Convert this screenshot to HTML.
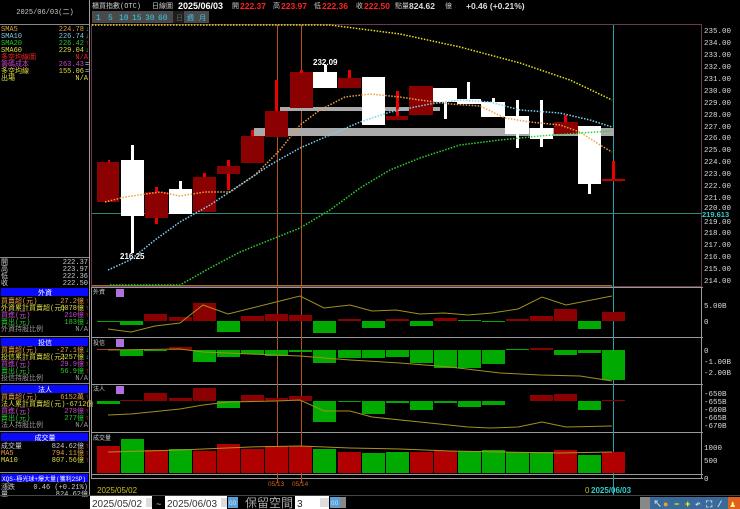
<!DOCTYPE html>
<html><head><meta charset="utf-8"><style>
html,body{margin:0;padding:0;background:#000;width:740px;height:509px;overflow:hidden}
svg{display:block}
text{font-family:"Liberation Mono","Noto Sans CJK TC",monospace}
.s{font-family:"Liberation Sans","Noto Sans CJK TC",sans-serif}
</style></head><body>
<svg width="740" height="509" viewBox="0 0 740 509" xmlns="http://www.w3.org/2000/svg" font-size="7">
<rect width="740" height="509" fill="#000"/>
<!-- left panel -->
<line x1="89.5" y1="0" x2="89.5" y2="495" stroke="#a89aa0"/>
<text x="45" y="14" fill="#ccc" text-anchor="middle">2025/06/03(二)</text>
<line x1="0" y1="24.5" x2="89" y2="24.5" stroke="#888"/>
<g>
<text x="1" y="31" fill="#e8a040">SMA5</text><text x="84" y="31" fill="#e8a040" text-anchor="end">224.78</text><text x="85" y="31" fill="#2c2">↓</text>
<text x="1" y="38" fill="#7fc8e8">SMA10</text><text x="84" y="38" fill="#7fc8e8" text-anchor="end">226.74</text><text x="85" y="38" fill="#2c2">↓</text>
<text x="1" y="45" fill="#2c2">SMA20</text><text x="84" y="45" fill="#2c2" text-anchor="end">226.42</text><text x="85" y="45" fill="#f22">↑</text>
<text x="1" y="52" fill="#dd4">SMA60</text><text x="84" y="52" fill="#dd4" text-anchor="end">229.04</text><text x="85" y="52" fill="#2c2">↓</text>
<text x="1" y="59" fill="#e22">多空均線圖</text><text x="88" y="59" fill="#e22" text-anchor="end">N/A</text>
<text x="1" y="66" fill="#c4c">籌碼成本</text><text x="84" y="66" fill="#c4c" text-anchor="end">263.43</text><text x="85" y="66" fill="#ccc">=</text>
<text x="1" y="73" fill="#dd4">多空均線</text><text x="84" y="73" fill="#dd4" text-anchor="end">155.06</text><text x="85" y="73" fill="#ccc">=</text>
<text x="1" y="80" fill="#dd4">出場</text><text x="88" y="80" fill="#dd4" text-anchor="end">N/A</text>
</g>
<line x1="0" y1="257.5" x2="89" y2="257.5" stroke="#888"/>
<text x="1" y="264" fill="#ccc">開</text><text x="88" y="264" fill="#ccc" text-anchor="end">222.37</text>
<text x="1" y="271" fill="#ccc">高</text><text x="88" y="271" fill="#ccc" text-anchor="end">223.97</text>
<text x="1" y="278" fill="#ccc">低</text><text x="88" y="278" fill="#ccc" text-anchor="end">222.36</text>
<text x="1" y="285" fill="#ccc">收</text><text x="88" y="285" fill="#ccc" text-anchor="end">222.50</text>
<!-- 外資 -->
<rect x="1" y="288" width="87" height="8" fill="#0a0aff"/><text x="45" y="295" fill="#fff" text-anchor="middle">外資</text>
<text x="1" y="303" fill="#e8a040">買賣超(元)</text><text x="84" y="303" fill="#e8a040" text-anchor="end">27.2億</text><text x="85" y="303" fill="#f22">↑</text>
<text x="1" y="310" fill="#dd4">外資累計買賣超(元)</text><text x="84" y="310" fill="#dd4" text-anchor="end">6078億</text><text x="85" y="310" fill="#f22">↑</text>
<text x="1" y="317" fill="#c4c">買進(元)</text><text x="84" y="317" fill="#c4c" text-anchor="end">210億</text><text x="85" y="317" fill="#f22">↑</text>
<text x="1" y="324" fill="#2c2">賣出(元)</text><text x="84" y="324" fill="#2c2" text-anchor="end">183億</text><text x="85" y="324" fill="#2c2">↓</text>
<text x="1" y="331" fill="#999">外資持股比例</text><text x="88" y="331" fill="#999" text-anchor="end">N/A</text>
<line x1="0" y1="336.5" x2="89" y2="336.5" stroke="#888"/>
<!-- 投信 -->
<rect x="1" y="338" width="87" height="8" fill="#0a0aff"/><text x="45" y="345" fill="#fff" text-anchor="middle">投信</text>
<text x="1" y="352" fill="#e8a040">買賣超(元)</text><text x="84" y="352" fill="#e8a040" text-anchor="end">-27.1億</text><text x="85" y="352" fill="#2c2">↓</text>
<text x="1" y="359" fill="#dd4">投信累計買賣超(元)</text><text x="84" y="359" fill="#dd4" text-anchor="end">2257億</text><text x="85" y="359" fill="#2c2">↓</text>
<text x="1" y="366" fill="#c4c">買進(元)</text><text x="84" y="366" fill="#c4c" text-anchor="end">29.9億</text><text x="85" y="366" fill="#f22">↑</text>
<text x="1" y="373" fill="#2c2">賣出(元)</text><text x="84" y="373" fill="#2c2" text-anchor="end">56.9億</text><text x="85" y="373" fill="#f22">↑</text>
<text x="1" y="380" fill="#999">投信持股比例</text><text x="88" y="380" fill="#999" text-anchor="end">N/A</text>
<line x1="0" y1="383.5" x2="89" y2="383.5" stroke="#888"/>
<!-- 法人 -->
<rect x="1" y="385" width="87" height="8" fill="#0a0aff"/><text x="45" y="392" fill="#fff" text-anchor="middle">法人</text>
<text x="1" y="399" fill="#e8a040">買賣超(元)</text><text x="84" y="399" fill="#e8a040" text-anchor="end">6152萬</text><text x="85" y="399" fill="#f22">↑</text>
<text x="1" y="406" fill="#dd4">法人累計買賣超(元)-6712億</text><text x="85" y="406" fill="#f22">↑</text>
<text x="1" y="413" fill="#c4c">買進(元)</text><text x="84" y="413" fill="#c4c" text-anchor="end">278億</text><text x="85" y="413" fill="#f22">↑</text>
<text x="1" y="420" fill="#2c2">賣出(元)</text><text x="84" y="420" fill="#2c2" text-anchor="end">277億</text><text x="85" y="420" fill="#f22">↑</text>
<text x="1" y="427" fill="#999">法人持股比例</text><text x="88" y="427" fill="#999" text-anchor="end">N/A</text>
<line x1="0" y1="431.5" x2="89" y2="431.5" stroke="#888"/>
<!-- 成交量 -->
<rect x="1" y="433" width="87" height="8" fill="#0a0aff"/><text x="45" y="440" fill="#fff" text-anchor="middle">成交量</text>
<text x="1" y="448" fill="#ccc">成交量</text><text x="84" y="448" fill="#ccc" text-anchor="end">824.62億</text><text x="85" y="448" fill="#f22">↑</text>
<text x="1" y="455" fill="#e8a040">MA5</text><text x="84" y="455" fill="#e8a040" text-anchor="end">794.11億</text><text x="85" y="455" fill="#f22">↑</text>
<text x="1" y="462" fill="#dd4">MA10</text><text x="84" y="462" fill="#dd4" text-anchor="end">807.56億</text><text x="85" y="462" fill="#f22">↑</text>
<line x1="0" y1="472.5" x2="89" y2="472.5" stroke="#888"/>
<rect x="1" y="474" width="87" height="8" fill="#0a0aff"/><text x="2" y="481" fill="#fff" font-size="6">XQS-極光球+爆大量(獲利2SP)</text>
<text x="1" y="489" fill="#ccc">漲跌</text><text x="88" y="489" fill="#ccc" text-anchor="end">0.46 (+0.21%)</text>
<text x="1" y="496" fill="#ccc">量</text><text x="88" y="496" fill="#ccc" text-anchor="end">824.62億</text>

<!-- header -->
<text x="92" y="8" fill="#ccc">櫃買指數(OTC)</text>
<text x="152" y="8" fill="#ccc">日線圖</text>
<text x="178" y="9" fill="#fff" class="s" font-size="9" font-weight="bold">2025/06/03</text>
<text x="232" y="8" fill="#ccc">開</text><text x="240" y="9" class="s" fill="#f22" font-size="8.5" font-weight="bold">222.37</text>
<text x="273" y="8" fill="#ccc">高</text><text x="281" y="9" class="s" fill="#f22" font-size="8.5" font-weight="bold">223.97</text>
<text x="314" y="8" fill="#ccc">低</text><text x="322" y="9" class="s" fill="#f22" font-size="8.5" font-weight="bold">222.36</text>
<text x="356" y="8" fill="#ccc">收</text><text x="364" y="9" class="s" fill="#f22" font-size="8.5" font-weight="bold">222.50</text>
<text x="395" y="8" fill="#ccc">點</text><text x="402" y="8" fill="#ccc">量</text>
<text x="409" y="9" class="s" fill="#ddd" font-size="8.5" font-weight="bold">824.62</text><text x="445" y="8" fill="#ccc">億</text>
<text x="466" y="9" class="s" fill="#ddd" font-size="8.5" font-weight="bold">+0.46 (+0.21%)</text>
<rect x="92" y="11" width="81" height="12" fill="#4a4a4a"/>
<rect x="173" y="11" width="11" height="12" fill="#1e1e1e"/>
<rect x="184" y="11" width="25" height="12" fill="#4a4a4a"/>
<g class="s" font-size="8" fill="#3ce">
<text x="96" y="20">1</text>
<text x="108" y="20">5</text>
<text x="119" y="20">10</text>
<text x="132" y="20">15</text>
<text x="145" y="20">30</text>
<text x="158" y="20">60</text>
</g>
<text x="176" y="20" fill="#666">日</text>
<text x="187" y="20" fill="#3ce">週</text>
<text x="199" y="20" fill="#3ce">月</text>

<!-- main panel frame -->
<rect x="91.5" y="24.5" width="610" height="262" fill="none" stroke="#6a3a50"/>
<line x1="91" y1="287.5" x2="703" y2="287.5" stroke="#999"/>
<line x1="91" y1="337.5" x2="703" y2="337.5" stroke="#999"/>
<line x1="91" y1="384.5" x2="703" y2="384.5" stroke="#999"/>
<line x1="91" y1="432.5" x2="703" y2="432.5" stroke="#999"/>
<line x1="91" y1="474.5" x2="703" y2="474.5" stroke="#999"/>
<line x1="91" y1="478.5" x2="703" y2="478.5" stroke="#999"/>
<line x1="701.5" y1="287" x2="701.5" y2="479" stroke="#999"/>
<line x1="91.5" y1="287" x2="91.5" y2="479" stroke="#999"/>

<!-- right axis -->
<g class="s" font-size="7.5" fill="#ddd">
<text x="704" y="33">235.00</text><text x="704" y="45">234.00</text><text x="704" y="57">233.00</text><text x="704" y="69">232.00</text>
<text x="704" y="81">231.00</text><text x="704" y="93">230.00</text><text x="704" y="105">229.00</text><text x="704" y="117">228.00</text>
<text x="704" y="129">227.00</text><text x="704" y="140">226.00</text><text x="704" y="152">225.00</text><text x="704" y="164">224.00</text>
<text x="704" y="176">223.00</text><text x="704" y="188">222.00</text><text x="704" y="200">221.00</text><text x="704" y="210">220.00</text>
<text x="704" y="224">219.00</text><text x="704" y="235">218.00</text><text x="704" y="247">217.00</text><text x="704" y="259">216.00</text>
<text x="704" y="271">215.00</text><text x="704" y="283">214.00</text>
<text x="704" y="308">5.00B</text><text x="704" y="324">0</text>
<text x="704" y="353">0</text><text x="704" y="364">-1.00B</text><text x="704" y="375">-2.00B</text>
<text x="704" y="396">-650B</text><text x="704" y="404">-655B</text><text x="704" y="412">-660B</text><text x="704" y="420">-665B</text><text x="704" y="428">-670B</text>
<text x="704" y="450">1000</text><text x="704" y="463">500</text><text x="704" y="481">0</text>
</g>
<rect x="702" y="211" width="36" height="7" fill="#000"/>
<text x="702" y="217" fill="#3cc" class="s" font-size="7.5" font-weight="bold">219.613</text>

<!-- reference lines -->
<line x1="92" y1="213.5" x2="701" y2="213.5" stroke="#2a8a7a"/>
<line x1="277.5" y1="25" x2="277.5" y2="483" stroke="#b85020"/>
<line x1="301.5" y1="25" x2="301.5" y2="483" stroke="#b85020"/>
<line x1="613.5" y1="25" x2="613.5" y2="495" stroke="#2aa0a8"/>
<line x1="92" y1="285.5" x2="612" y2="285.5" stroke="#a07020"/>

<!-- gray bars -->
<rect x="280" y="107" width="160" height="4" fill="#aaa"/>
<rect x="254" y="128" width="360" height="8" fill="#aaa"/>

<!-- candles -->
<g>
<rect x="108" y="160" width="2" height="3" fill="#e00"/><rect x="97" y="162" width="22" height="40" fill="#8b0000"/>
<rect x="131" y="145" width="3" height="108" fill="#fff"/><rect x="121" y="160" width="23" height="56" fill="#fff"/>
<rect x="155" y="187" width="3" height="37" fill="#e00"/><rect x="145" y="192" width="23" height="26" fill="#8b0000"/>
<rect x="179" y="181" width="3" height="10" fill="#fff"/><rect x="169" y="189" width="23" height="25" fill="#fff"/>
<rect x="203" y="173" width="3" height="5" fill="#e00"/><rect x="193" y="177" width="23" height="35" fill="#8b0000"/>
<rect x="227" y="160" width="3" height="30" fill="#e00"/><rect x="217" y="166" width="23" height="8" fill="#8b0000"/>
<rect x="251" y="130" width="3" height="7" fill="#e00"/><rect x="241" y="136" width="23" height="27" fill="#8b0000"/>
<rect x="275" y="80" width="3" height="31" fill="#e00"/><rect x="265" y="111" width="23" height="26" fill="#8b0000"/>
<rect x="290" y="72" width="23" height="36" fill="#8b0000"/><rect x="300" y="70" width="3" height="3" fill="#e00"/>
<rect x="324" y="65" width="3" height="8" fill="#fff"/><rect x="313" y="72" width="24" height="16" fill="#fff"/>
<rect x="348" y="70" width="3" height="9" fill="#e00"/><rect x="338" y="78" width="23" height="10" fill="#8b0000"/>
<rect x="362" y="77" width="23" height="48" fill="#fff"/>
<rect x="396" y="91" width="3" height="27" fill="#e00"/><rect x="386" y="116" width="22" height="4" fill="#8b0000"/>
<rect x="409" y="86" width="24" height="29" fill="#8b0000"/>
<rect x="444" y="100" width="3" height="19" fill="#fff"/><rect x="433" y="88" width="24" height="14" fill="#fff"/>
<rect x="467" y="82" width="3" height="22" fill="#fff"/><rect x="457" y="99" width="24" height="5" fill="#fff"/>
<rect x="481" y="102" width="24" height="15" fill="#fff"/><rect x="492" y="98" width="3" height="5" fill="#fff"/>
<rect x="516" y="100" width="3" height="48" fill="#fff"/><rect x="505" y="116" width="24" height="18" fill="#fff"/>
<rect x="540" y="100" width="3" height="47" fill="#fff"/><rect x="530" y="128" width="23" height="11" fill="#fff"/>
<rect x="564" y="115" width="3" height="8" fill="#e00"/><rect x="554" y="122" width="24" height="12" fill="#8b0000"/>
<rect x="588" y="180" width="3" height="14" fill="#fff"/><rect x="578" y="126" width="23" height="58" fill="#fff"/>
<rect x="612" y="161" width="3" height="19" fill="#e00"/><rect x="602" y="179" width="23" height="2" fill="#b00"/>
</g>
<text x="313" y="65" fill="#fff" class="s" font-size="8" font-weight="bold">232.09</text>
<text x="120" y="259" fill="#fff" class="s" font-size="8" font-weight="bold">216.25</text>

<!-- MAs -->
<g fill="none" stroke-width="1.5" stroke-dasharray="1.5 1.5">
<polyline stroke="#e8e020" points="92,25 330,25 400,34 460,47 520,63 570,80 612,100"/>
<polyline stroke="#f0a040" points="105,202 125,197 160,192 180,196 205,192 230,192 255,175 280,150 300,125 320,110 345,97 370,94 400,97 420,100 450,104 480,106 505,118 530,122 560,125 580,132 600,145 612,152"/>
<polyline stroke="#80d0f0" points="108,270 130,260 155,240 180,222 210,205 240,185 270,165 300,148 330,135 360,122 390,112 430,104 460,100 490,102 520,110 560,113 590,120 612,127"/>
<polyline stroke="#30d030" points="110,285 180,285 210,268 240,252 270,240 300,228 330,210 360,188 390,170 420,158 460,145 500,140 540,136 580,133 612,131"/>
</g>

<!-- subpanel labels -->
<text x="93" y="294" fill="#ccc" font-size="6">外資</text><rect x="116" y="289" width="8" height="8" fill="#b070e0"/>
<text x="93" y="345" fill="#ccc" font-size="6">投信</text><rect x="116" y="339" width="8" height="8" fill="#b070e0"/>
<text x="93" y="391" fill="#ccc" font-size="6">法人</text><rect x="116" y="386" width="8" height="8" fill="#b070e0"/>
<text x="93" y="440" fill="#ccc" font-size="6">成交量</text>

<!-- 外資 bars zero 321 -->
<g>
<rect x="97" y="321" width="23" height="1" fill="#0a0"/>
<rect x="120" y="321" width="23" height="4" fill="#0a0"/>
<rect x="144" y="314" width="23" height="7" fill="#8b0000"/>
<rect x="169" y="317" width="23" height="4" fill="#8b0000"/>
<rect x="193" y="303" width="23" height="18" fill="#8b0000"/>
<rect x="217" y="321" width="23" height="11" fill="#0a0"/>
<rect x="241" y="316" width="23" height="5" fill="#8b0000"/>
<rect x="265" y="314" width="23" height="7" fill="#8b0000"/>
<rect x="289" y="315" width="23" height="6" fill="#8b0000"/>
<rect x="313" y="321" width="23" height="12" fill="#0a0"/>
<rect x="338" y="319" width="23" height="2" fill="#8b0000"/>
<rect x="362" y="321" width="23" height="7" fill="#0a0"/>
<rect x="386" y="319" width="23" height="2" fill="#8b0000"/>
<rect x="410" y="321" width="23" height="5" fill="#0a0"/>
<rect x="434" y="318" width="23" height="3" fill="#8b0000"/>
<rect x="458" y="320" width="23" height="1" fill="#0a0"/>
<rect x="482" y="321" width="23" height="1" fill="#0a0"/>
<rect x="506" y="319" width="23" height="2" fill="#8b0000"/>
<rect x="530" y="316" width="23" height="5" fill="#8b0000"/>
<rect x="554" y="309" width="23" height="12" fill="#8b0000"/>
<rect x="578" y="321" width="23" height="8" fill="#0a0"/>
<rect x="602" y="312" width="23" height="9" fill="#8b0000"/>
</g>
<polyline fill="none" stroke="#a09020" points="108,329 131,332 155,326 180,323 203,305 228,314 252,308 276,302 300,296 324,308 350,305 372,311 396,310 420,314 444,313 468,315 492,313 518,309 542,297 566,305 612,296"/>

<!-- 投信 zero 350 -->
<g>
<rect x="97" y="349" width="23" height="1" fill="#a04020"/>
<rect x="120" y="350" width="23" height="6" fill="#0a0"/>
<rect x="144" y="350" width="23" height="1" fill="#0a0"/>
<rect x="169" y="347" width="23" height="3" fill="#8b0000"/>
<rect x="193" y="350" width="23" height="12" fill="#0a0"/>
<rect x="217" y="350" width="23" height="7" fill="#0a0"/>
<rect x="241" y="350" width="23" height="4" fill="#0a0"/>
<rect x="265" y="350" width="23" height="6" fill="#0a0"/>
<rect x="289" y="350" width="23" height="2" fill="#0a0"/>
<rect x="313" y="350" width="23" height="13" fill="#0a0"/>
<rect x="338" y="350" width="23" height="8" fill="#0a0"/>
<rect x="362" y="350" width="23" height="8" fill="#0a0"/>
<rect x="386" y="350" width="23" height="7" fill="#0a0"/>
<rect x="410" y="350" width="23" height="13" fill="#0a0"/>
<rect x="434" y="350" width="23" height="18" fill="#0a0"/>
<rect x="458" y="350" width="23" height="18" fill="#0a0"/>
<rect x="482" y="350" width="23" height="14" fill="#0a0"/>
<rect x="506" y="349" width="23" height="1" fill="#0a0"/>
<rect x="530" y="348" width="23" height="2" fill="#8b0000"/>
<rect x="554" y="350" width="23" height="5" fill="#0a0"/>
<rect x="578" y="350" width="23" height="3" fill="#0a0"/>
<rect x="602" y="350" width="23" height="30" fill="#0a0"/>
</g>
<polyline fill="none" stroke="#a09020" points="108,350 180,349 203,352 250,354 300,356 350,360 400,363 450,367 500,373 540,375 580,376 612,381"/>

<!-- 法人 zero 401 -->
<g>
<rect x="97" y="401" width="23" height="3" fill="#0a0"/>
<rect x="120" y="400" width="23" height="1" fill="#8b0000"/>
<rect x="144" y="393" width="23" height="8" fill="#8b0000"/>
<rect x="169" y="398" width="23" height="3" fill="#8b0000"/>
<rect x="193" y="388" width="23" height="13" fill="#8b0000"/>
<rect x="217" y="401" width="23" height="7" fill="#0a0"/>
<rect x="241" y="395" width="23" height="6" fill="#8b0000"/>
<rect x="265" y="398" width="23" height="3" fill="#8b0000"/>
<rect x="289" y="396" width="23" height="5" fill="#8b0000"/>
<rect x="313" y="401" width="23" height="21" fill="#0a0"/>
<rect x="338" y="401" width="23" height="1" fill="#0a0"/>
<rect x="362" y="401" width="23" height="13" fill="#0a0"/>
<rect x="386" y="401" width="23" height="2" fill="#0a0"/>
<rect x="410" y="401" width="23" height="9" fill="#0a0"/>
<rect x="434" y="401" width="23" height="2" fill="#0a0"/>
<rect x="458" y="401" width="23" height="6" fill="#0a0"/>
<rect x="482" y="401" width="23" height="4" fill="#0a0"/>
<rect x="530" y="395" width="23" height="6" fill="#8b0000"/>
<rect x="554" y="394" width="23" height="7" fill="#8b0000"/>
<rect x="578" y="401" width="23" height="9" fill="#0a0"/>
<rect x="602" y="400" width="23" height="1" fill="#8b0000"/>
</g>
<polyline fill="none" stroke="#a09020" points="108,415 131,414 180,409 203,405 228,402 276,401 300,400 324,411 350,411 372,417 420,422 468,427 490,428 518,427 542,422 566,427 612,426"/>

<!-- volume base 473 -->
<g>
<rect x="97" y="446" width="23" height="27" fill="#b00000"/>
<rect x="121" y="439" width="23" height="34" fill="#0a0"/>
<rect x="145" y="450" width="23" height="23" fill="#b00000"/>
<rect x="169" y="449" width="23" height="24" fill="#0a0"/>
<rect x="193" y="451" width="23" height="22" fill="#b00000"/>
<rect x="217" y="444" width="23" height="29" fill="#b00000"/>
<rect x="241" y="449" width="23" height="24" fill="#b00000"/>
<rect x="265" y="446" width="23" height="27" fill="#b00000"/>
<rect x="289" y="446" width="23" height="27" fill="#b00000"/>
<rect x="313" y="449" width="23" height="24" fill="#0a0"/>
<rect x="338" y="452" width="23" height="21" fill="#b00000"/>
<rect x="362" y="453" width="23" height="20" fill="#0a0"/>
<rect x="386" y="452" width="23" height="21" fill="#0a0"/>
<rect x="410" y="452" width="23" height="21" fill="#b00000"/>
<rect x="434" y="451" width="23" height="22" fill="#b00000"/>
<rect x="458" y="451" width="23" height="22" fill="#0a0"/>
<rect x="482" y="450" width="23" height="23" fill="#0a0"/>
<rect x="506" y="452" width="23" height="21" fill="#0a0"/>
<rect x="530" y="452" width="23" height="21" fill="#0a0"/>
<rect x="554" y="450" width="23" height="23" fill="#b00000"/>
<rect x="578" y="455" width="23" height="18" fill="#0a0"/>
<rect x="602" y="452" width="23" height="21" fill="#b00000"/>
</g>
<polyline fill="none" stroke="#b09020" points="108,452 180,450 250,447 300,446 350,448 400,449 450,451 500,452 560,453 612,452"/>

<!-- dates -->
<text x="97" y="493" fill="#c8c020" class="s" font-size="8">2025/05/02</text>
<text x="268" y="486" fill="#d06020" class="s" font-size="6.5">05/13</text>
<text x="292" y="486" fill="#d06020" class="s" font-size="6.5">05/14</text>
<text x="585" y="493" fill="#c8c020" class="s" font-size="8">0</text>
<text x="591" y="493" fill="#3cc" class="s" font-size="8" font-weight="bold">2025/06/03</text>
<line x1="0" y1="495.5" x2="740" y2="495.5" stroke="#444"/>

<!-- bottom controls -->
<rect x="90" y="496" width="62" height="13" fill="#fff"/><text x="92" y="507" fill="#333" class="s" font-size="10">2025/05/02</text>
<rect x="146" y="498" width="6" height="9" fill="#ddd"/>
<text x="156" y="507" fill="#ccc" font-size="9">~</text>
<rect x="165" y="496" width="62" height="13" fill="#fff"/><text x="167" y="507" fill="#333" class="s" font-size="10">2025/06/03</text>
<rect x="221" y="498" width="6" height="9" fill="#ddd"/>
<rect x="228" y="497" width="10" height="11" fill="#5aa0d8"/><text x="229" y="505" fill="#cde" font-size="6">GO</text>
<text x="245" y="507" fill="#aaa" class="s" font-size="12">保留空間</text>
<rect x="295" y="496" width="34" height="13" fill="#fff"/><text x="297" y="507" fill="#222" class="s" font-size="10">3</text>
<rect x="320" y="498" width="9" height="9" fill="#ddd"/>
<rect x="330" y="497" width="10" height="11" fill="#5aa0d8"/><text x="331" y="505" fill="#cde" font-size="6">GO</text>
<rect x="340" y="497" width="6" height="11" fill="#888"/>
<rect x="640" y="497" width="100" height="12" fill="#3a6a9a"/>
<rect x="640" y="497" width="10" height="12" fill="#888"/>
<g class="s" font-size="9" font-weight="bold">
<text x="653" y="507" fill="#cde">↖</text><text x="663" y="507" fill="#f0a030">●</text>
<text x="674" y="507" fill="#ff0">−</text><text x="685" y="507" fill="#ff0">+</text>
<text x="695" y="507" fill="#cde">↶</text><text x="706" y="507" fill="#cde">⛶</text>
<text x="717" y="507" fill="#cde">/</text>
</g>
<rect x="728" y="497" width="12" height="12" fill="#e06020"/><text x="730" y="507" fill="#ff8" font-size="9">♟</text>
</svg>
</body></html>
